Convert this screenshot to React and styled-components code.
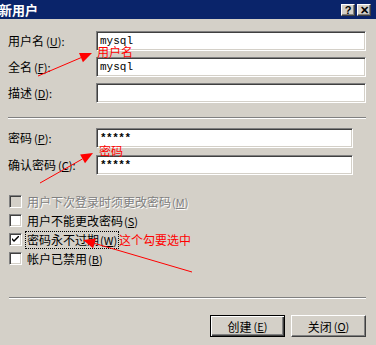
import styled, { createGlobalStyle } from 'styled-components'

const GlobalStyle = createGlobalStyle`
  html, body {
    margin: 0;
    padding: 0;
    background: #d4d0c8;
  }
  * {
    box-sizing: border-box;
  }
`

const cjk = `"Noto Sans CJK SC", "Noto Sans", sans-serif`

const Window = styled.div`
  position: relative;
  width: 376px;
  height: 345px;
  overflow: hidden;
  background: #d4d0c8;
  font-family: ${cjk};
  font-size: 12px;
  color: #000;
`

const TitleBar = styled.div`
  height: 19px;
  background: #0a246a;
  display: flex;
  align-items: center;
  justify-content: space-between;
  padding: 0 5px 0 0;
`

const Title = styled.span`
  color: #fff;
  font-weight: bold;
  font-size: 13px;
  line-height: 19px;
  margin-left: -1px;
`

const Caps = styled.div`
  display: flex;
  gap: 2px;
  margin-top: 1px;
`

const CapButton = styled.div`
  width: 14px;
  height: 12px;
  background: #d4d0c8;
  border-top: 1px solid #fff;
  border-left: 1px solid #fff;
  border-right: 1px solid #404040;
  border-bottom: 1px solid #404040;
  box-shadow: inset -1px -1px 0 #808080;
  display: flex;
  align-items: center;
  justify-content: center;
  font-family: "Liberation Sans", sans-serif;
  font-weight: bold;
  font-size: 11px;
  line-height: 1;
  color: #000;
`

const Body = styled.div`
  padding: 12px 10px 0 8px;
  display: flex;
  flex-direction: column;
`

const FieldGrid = styled.div`
  display: grid;
  grid-template-columns: 88px ${({ $inputWidth }) => $inputWidth};
  row-gap: ${({ $gap }) => $gap}px;
  align-items: center;
  margin-top: ${({ $top }) => $top || 0}px;
`

const Label = styled.span`
  white-space: nowrap;
  line-height: 14px;
`

const Mnemonic = styled.span`
  margin-left: 2px;
  font-size: 11px;
  & u {
    text-underline-offset: 1px;
  }
`

const Input = styled.div`
  height: 20px;
  background: #fff;
  border-top: 1px solid #808080;
  border-left: 1px solid #808080;
  border-right: 1px solid #fff;
  border-bottom: 1px solid #fff;
  box-shadow: inset 1px 1px 0 #404040, inset -1px -1px 0 #d4d0c8;
  padding: 0 3px;
  display: flex;
  align-items: center;
  font-family: "Liberation Mono", monospace;
  font-size: 11px;
  font-weight: ${({ $mask }) => ($mask ? 'bold' : 'normal')};
  letter-spacing: ${({ $mask }) => ($mask ? '-0.5px' : '0')};
`

const Separator = styled.div`
  height: 2px;
  border-top: 1px solid #808080;
  border-bottom: 1px solid #fff;
  margin-top: ${({ $top }) => $top}px;
  margin-left: ${({ $left }) => $left || 0}px;
`

const Checks = styled.div`
  display: flex;
  flex-direction: column;
  margin-top: 17px;
  padding-left: 1px;
`

const CheckRow = styled.div`
  height: 19px;
  display: flex;
  align-items: center;
  gap: 5px;
  color: ${({ $disabled }) => ($disabled ? '#808080' : '#000')};
  text-shadow: ${({ $disabled }) => ($disabled ? '1px 1px 0 #fff' : 'none')};
`

const Box = styled.div`
  width: 13px;
  height: 13px;
  flex: none;
  background: ${({ $disabled }) => ($disabled ? '#d4d0c8' : '#fff')};
  border-top: 1px solid #808080;
  border-left: 1px solid #808080;
  border-right: 1px solid #fff;
  border-bottom: 1px solid #fff;
  box-shadow: inset 1px 1px 0 #404040, inset -1px -1px 0 #d4d0c8;
  display: flex;
  align-items: center;
  justify-content: center;
`

const CheckText = styled.span`
  padding: 1px 1px;
  margin-left: -1px;
  line-height: 14px;
  outline: ${({ $focus }) => ($focus ? '1px dotted #000' : 'none')};
  outline-offset: 0;
  & > span {
    margin-left: 1px;
  }
`

const ButtonRow = styled.div`
  display: flex;
  justify-content: flex-end;
  gap: 6px;
  margin-top: 16px;
`

const Button = styled.div`
  width: 75px;
  height: 22px;
  background: #d4d0c8;
  display: flex;
  align-items: center;
  justify-content: center;
  border: 1px solid;
  border-color: ${({ $default }) => ($default ? '#000' : '#fff #404040 #404040 #fff')};
  box-shadow: ${({ $default }) =>
    $default
      ? 'inset 1px 1px 0 #fff, inset -1px -1px 0 #404040, inset -2px -2px 0 #808080'
      : 'inset -1px -1px 0 #808080'};
`

const Note = styled.span`
  position: absolute;
  left: ${({ $x }) => $x}px;
  top: ${({ $y }) => $y}px;
  color: #f00;
  font-size: 12px;
  line-height: 13px;
  white-space: nowrap;
  pointer-events: none;
`

const Arrows = styled.svg`
  position: absolute;
  left: 0;
  top: 0;
  pointer-events: none;
`

function Arrow({ x1, y1, x2, y2 }) {
  const a = Math.atan2(y2 - y1, x2 - x1)
  const len = 12
  const w = 5
  const bx = x2 - len * Math.cos(a)
  const by = y2 - len * Math.sin(a)
  const px = -Math.sin(a) * w
  const py = Math.cos(a) * w
  return (
    <g>
      <line x1={x1} y1={y1} x2={bx} y2={by} stroke="#f00" strokeWidth="1" />
      <polygon points={`${x2},${y2} ${bx + px},${by + py} ${bx - px},${by - py}`} fill="#f00" />
    </g>
  )
}

function Check() {
  return (
    <svg width="7" height="7" viewBox="0 0 7 7">
      <path d="M0 2 L0 4 L2 6 L7 1 L7 -1 L2 4 Z" fill="#000" />
    </svg>
  )
}

function Key({ k, after = '' }) {
  return (
    <Mnemonic>
      (<u>{k}</u>){after}
    </Mnemonic>
  )
}

function Field({ label, k, value, mask }) {
  return (
    <>
      <Label>
        {label}
        <Key k={k} after=":" />
      </Label>
      <Input $mask={mask}>{value}</Input>
    </>
  )
}

const options = [
  { text: '用户下次登录时须更改密码', k: 'M', disabled: true },
  { text: '用户不能更改密码', k: 'S' },
  { text: '密码永不过期', k: 'W', checked: true, focus: true },
  { text: '帐户已禁用', k: 'B' },
]

export default function App() {
  return (
    <Window>
      <GlobalStyle />
      <TitleBar>
        <Title>新用户</Title>
        <Caps>
          <CapButton>?</CapButton>
          <CapButton>✕</CapButton>
        </Caps>
      </TitleBar>
      <Body>
        <FieldGrid $inputWidth="270px" $gap={6}>
          <Field label="用户名" k="U" value="mysql" />
          <Field label="全名" k="F" value="mysql" />
          <Field label="描述" k="D" value="" />
        </FieldGrid>
        <Separator $top={14} />
        <FieldGrid $inputWidth="257px" $gap={7} $top={9}>
          <Field label="密码" k="P" value="*****" mask />
          <Field label="确认密码" k="C" value="*****" mask />
        </FieldGrid>
        <Checks>
          {options.map((o) => (
            <CheckRow key={o.k} $disabled={o.disabled}>
              <Box $disabled={o.disabled}>{o.checked && <Check />}</Box>
              <CheckText $focus={o.focus}>
                {o.text}
                <Key k={o.k} />
              </CheckText>
            </CheckRow>
          ))}
        </Checks>
        <Separator $top={29} $left={1} />
        <ButtonRow>
          <Button $default>
            创建<Key k="E" />
          </Button>
          <Button>
            关闭<Key k="O" />
          </Button>
        </ButtonRow>
      </Body>
      <Note $x={97} $y={45}>用户名</Note>
      <Note $x={99} $y={144}>密码</Note>
      <Note $x={119} $y={233}>这个勾要选中</Note>
      <Arrows width="376" height="345">
        <Arrow x1={38} y1={76} x2={92} y2={53} />
        <Arrow x1={40} y1={183} x2={93} y2={153} />
        <Arrow x1={192} y1={272} x2={83} y2={240} />
      </Arrows>
    </Window>
  )
}
